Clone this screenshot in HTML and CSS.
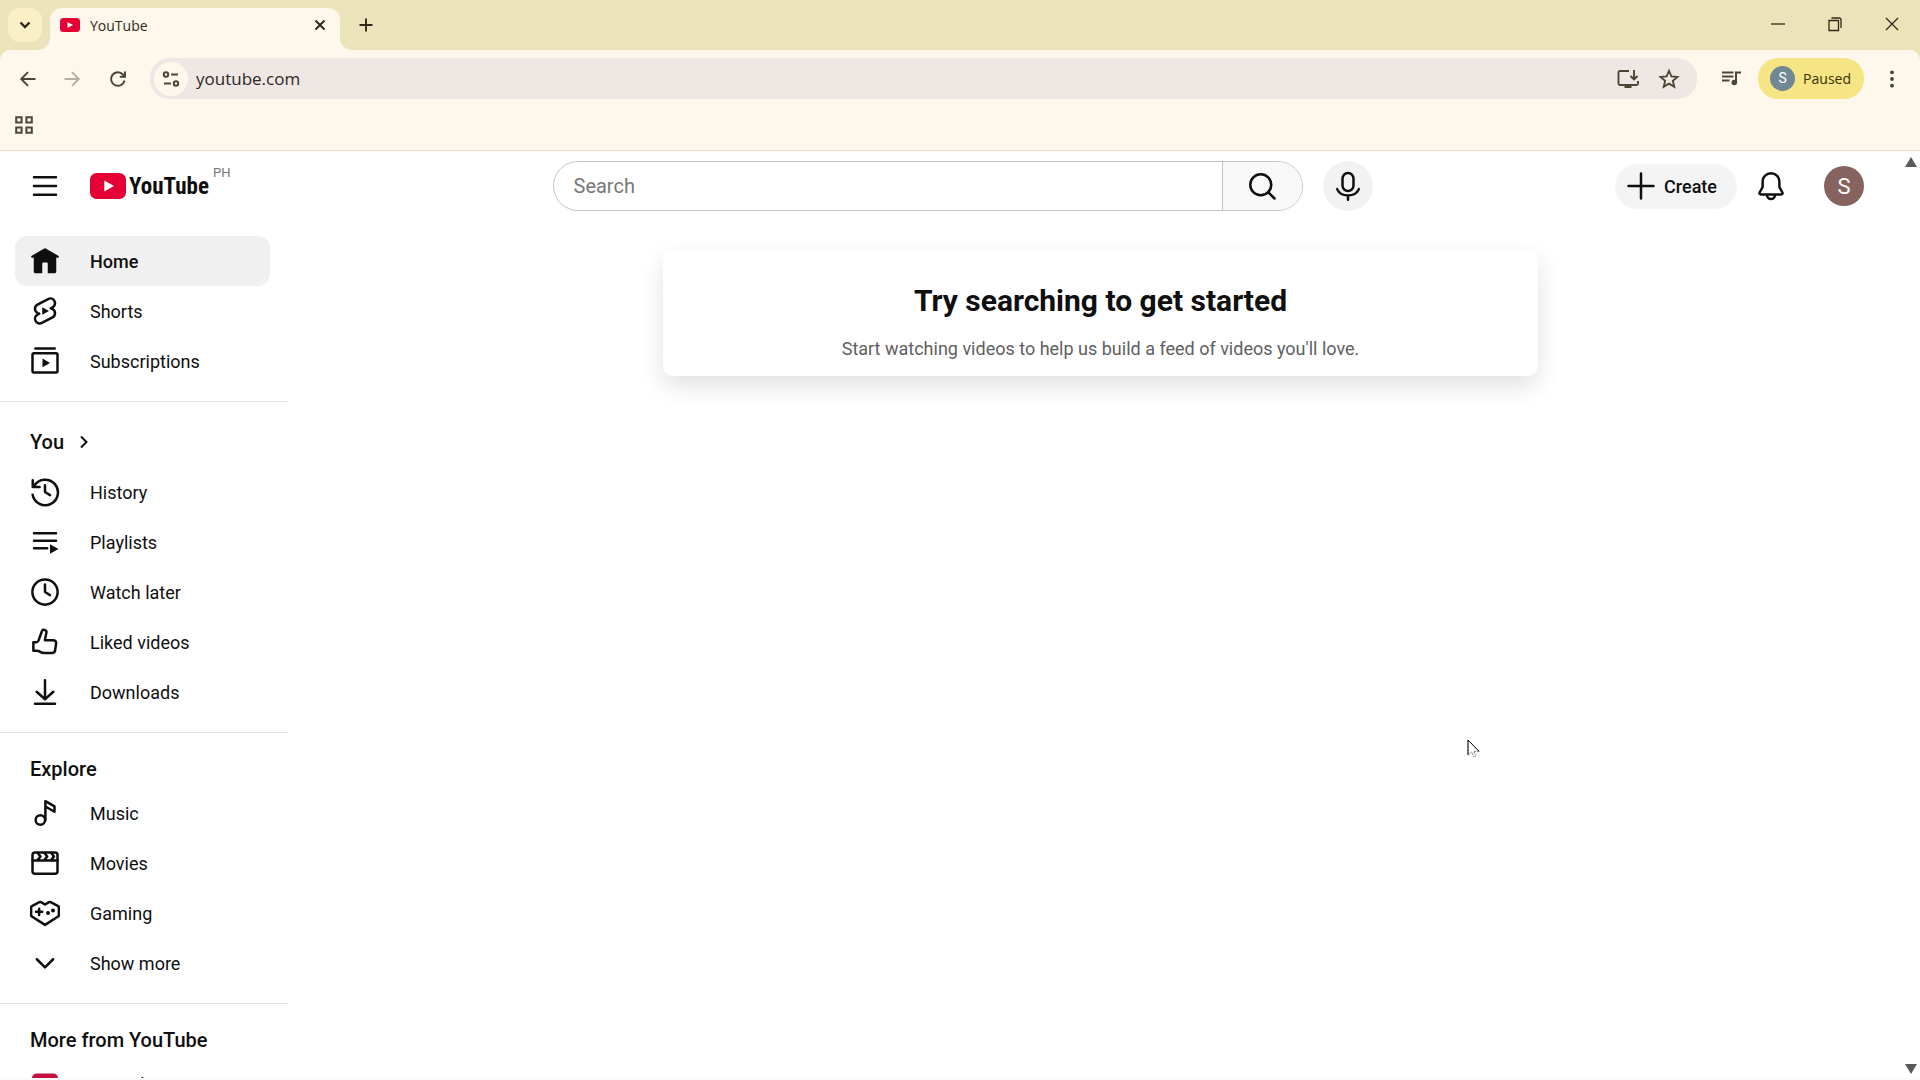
FILE: index.html
```html
<!DOCTYPE html>
<html lang="en">
<head>
    <meta charset="UTF-8">
    <meta name="viewport" content="width=device-width, initial-scale=1.0">
    <title>YouTube</title>
    <link rel="stylesheet" href="styles.css">
</head>
<body>
    <div class="tab-strip">
        <button class="tab-search" aria-label="Search tabs">
            <svg width="16" height="16" viewBox="0 0 16 16"><path d="M3.500 5.500L8 10l4.500-4.500" stroke-width="2.400"/></svg>
        </button>
        <div class="tab">
            <svg class="favicon" width="20" height="14" viewBox="0 0 20 14"><rect width="20" height="14" rx="3.500"/><path d="M7.500 4l5.500 3-5.500 3z"/></svg>
            <span class="tab-title">YouTube</span>
            <button class="tab-close" aria-label="Close tab">
                <svg width="16" height="16" viewBox="0 0 16 16"><path d="M3.500 3.500l9 9m0-9l-9 9" stroke-width="2"/></svg>
            </button>
        </div>
        <button class="new-tab" aria-label="New tab">
            <svg width="16" height="16" viewBox="0 0 16 16"><path d="M8 1.500v13M1.500 8h13" stroke-width="1.900"/></svg>
        </button>
        <div class="window-buttons">
            <button aria-label="Minimize"><svg width="16" height="16" viewBox="0 0 16 16"><path d="M1 8h14" stroke-width="1.300"/></svg></button>
            <button aria-label="Restore"><svg width="16" height="16" viewBox="0 0 16 16"><path d="M2 4.500h9.500v10H2zM4.500 2H12a2 2 0 0 1 2 2v8" stroke-width="1.300"/></svg></button>
            <button aria-label="Close"><svg width="16" height="16" viewBox="0 0 16 16"><path d="M2 2l12 12M14 2L2 14" stroke-width="1.300"/></svg></button>
        </div>
    </div>

    <div class="browser-bar">
        <div class="toolbar">
            <button class="tool" aria-label="Back"><svg width="20" height="20" viewBox="0 0 20 20"><path d="M17.500 10H3.500M10 3.200L3.200 10l6.800 6.800" stroke-width="1.900"/></svg></button>
            <button class="tool" aria-label="Forward" disabled><svg width="20" height="20" viewBox="0 0 20 20"><path d="M2.500 10h14M10 3.200l6.800 6.800-6.800 6.800" stroke-width="1.900"/></svg></button>
            <button class="tool reload" aria-label="Reload"><svg width="20" height="20" viewBox="0 0 20 20"><path d="M16.500 11.500A6.800 6.800 0 1 1 15 5.500L17 7.500M17 2.500v5.200h-5.200" stroke-width="2"/></svg></button>
            <div class="omnibox">
                <button class="site-info" aria-label="View site information">
                    <svg width="18" height="18" viewBox="0 0 18 18"><circle cx="4" cy="4.500" r="2.200"/><path d="M9 4.500h7M2 13.500h7"/><circle cx="14" cy="13.500" r="2.200"/></svg>
                </button>
                <input class="address" type="text" value="youtube.com" aria-label="Address">
                <button class="omni-action" aria-label="Install YouTube"><svg width="24" height="24" viewBox="0 0 24 24"><path d="M13 4H4a1.500 1.500 0 0 0-1.500 1.500v11A1.500 1.500 0 0 0 4 18h16.500a1.500 1.500 0 0 0 1.500-1.500V14M18 3v9M14.500 9l3.500 3.500L21.500 9" stroke-width="1.900"/><path d="M8.500 18h7v3h-7z" fill="currentColor" stroke="none"/></svg></button>
                <button class="omni-action" aria-label="Bookmark this tab"><svg width="22" height="22" viewBox="0 0 24 24"><path d="M12 3l2.600 6.200 6.700.5-5.100 4.400 1.600 6.500-5.800-3.500-5.800 3.500 1.600-6.500-5.100-4.400 6.700-.5z" stroke-width="2"/></svg></button>
            </div>
            <button class="tool" aria-label="Media controls"><svg width="22" height="22" viewBox="0 0 22 22"><path d="M2 4.500h11.500M2 8.500h11.500M2 12.500h7.500M16 14V4.500h5" stroke-width="2"/><circle cx="14.300" cy="14.500" r="2.800" fill="currentColor" stroke="none"/></svg></button>
            <button class="profile"><span class="profile-badge">S</span>Paused</button>
            <button class="tool" aria-label="Menu"><svg width="20" height="20" viewBox="0 0 20 20"><g fill="currentColor" stroke="none"><circle cx="10" cy="3.300" r="1.900"/><circle cx="10" cy="10" r="1.900"/><circle cx="10" cy="16.700" r="1.900"/></g></svg></button>
        </div>
        <div class="bookmarks">
            <button class="apps" aria-label="Apps"><svg width="18" height="18" viewBox="0 0 18 18"><path d="M1.200 1.200h5.400v5.400H1.200zM11.400 1.200h5.400v5.400h-5.400zM1.200 11.400h5.400v5.400H1.200zM11.400 11.400h5.400v5.400h-5.400z" stroke-width="2"/></svg></button>
        </div>
    </div>

    <div class="viewport">
        <div class="page">
            <header class="masthead">
                <div class="start">
                    <button class="guide-button" aria-label="Guide"><svg class="icon" viewBox="0 0 24 24"><path d="M3.200 5h17.600M3.200 12h17.600M3.200 19h17.600"/></svg></button>
                    <a class="logo" href="#">
                        <svg width="36" height="26" viewBox="0 0 36 26"><rect width="36" height="26" rx="6.500" fill="#e50035"/><path d="M14.300 7.500L24 13l-9.700 5.500z" fill="#fff"/></svg>
                        <span class="logo-text">YouTube</span>
                        <span class="country">PH</span>
                    </a>
                </div>
                <div class="center">
                    <form class="search">
                        <input class="search-input" type="text" placeholder="Search" aria-label="Search">
                        <button class="search-button" type="button" aria-label="Search"><svg class="icon" viewBox="0 0 24 24"><circle cx="11" cy="11" r="8.400"/><path d="M17 17l5 5"/></svg></button>
                    </form>
                    <button class="mic" aria-label="Search with your voice"><svg class="icon" viewBox="0 0 24 24"><rect x="7.600" y="1.600" width="8.800" height="14.400" rx="4.400"/><path d="M3.300 14.500c1.300 3 4.600 5 8.700 5s7.400-2 8.700-5M12 19.500V23"/></svg></button>
                </div>
                <div class="end">
                    <button class="create"><svg class="icon" viewBox="0 0 24 24"><path d="M12 2v20M2 12h20"/></svg>Create</button>
                    <button class="bell" aria-label="Notifications"><svg class="icon" viewBox="0 0 24 24"><path d="M12 1.800a6.700 6.700 0 0 0-6.700 6.700v4.300L3 17c-.6 1.100 0 1.700 1 1.700h16c1 0 1.600-.6 1-1.700l-2.300-4.200V8.500A6.700 6.700 0 0 0 12 1.800zM8.800 19.200a3.200 3.200 0 0 0 6.400 0"/></svg></button>
                    <button class="avatar" aria-label="Account">S</button>
                </div>
            </header>

            <div class="content">
                <nav class="guide">
                    <div class="section">
                        <a class="item active" href="#"><svg class="icon" viewBox="0 0 24 24"><path class="solid" d="M11.400 1.900a1.200 1.200 0 0 1 1.200 0l10 5.900c.6.400.7 1 .2 1.400-.5.400-1 .3-1.800 0V20.400c0 .9-.6 1.400-1.500 1.400H14.200V14c0-.5-.3-.8-.8-.8h-2.800c-.5 0-.8.300-.8.8v7.800H4.500c-.9 0-1.500-.5-1.500-1.400V9.200c-.8.300-1.300.4-1.800 0-.5-.4-.4-1 .2-1.400z"/></svg>Home</a>
                        <a class="item" href="#"><svg class="icon" viewBox="0 0 24 24"><path d="M17.770 10.320l-1.200-.5L18 9.060c1.840-.96 2.530-3.230 1.560-5.060s-3.240-2.530-5.070-1.560L6 6.940c-1.290.68-2.070 2.040-2 3.490.07 1.420.93 2.670 2.220 3.250.03.010 1.200.5 1.200.5L6 14.930c-1.830.97-2.530 3.240-1.560 5.070.97 1.830 3.240 2.530 5.070 1.560l8.500-4.500c1.290-.68 2.060-2.040 1.990-3.490-.07-1.420-.94-2.680-2.230-3.250z"/><path class="solid" d="M9.800 9v6l5.400-3z"/></svg>Shorts</a>
                        <a class="item" href="#"><svg class="icon" viewBox="0 0 24 24"><path d="M4.300 2h15.400"/><rect x="2" y="5.800" width="20" height="15.400" rx="1.200"/><path class="solid" d="M10 10v7l6-3.500z"/></svg>Subscriptions</a>
                    </div>
                    <div class="section">
                        <a class="heading-link" href="#">You<svg width="20" height="20" viewBox="0 0 20 20"><path d="M7 4.500l5.500 5.500L7 15.500"/></svg></a>
                        <a class="item" href="#"><svg class="icon" viewBox="0 0 24 24"><path d="M2.100 14.200A10.200 10.200 0 1 0 3.300 7.300M2.200 2.500v5.400h5.500M12 6.500V12l4 2.500"/></svg>History</a>
                        <a class="item" href="#"><svg class="icon" viewBox="0 0 24 24"><path d="M3.200 5h17.600M3.200 11h17.600M3.200 17h10.600"/><path class="solid" d="M16 13.800v7.600l6.800-3.800z"/></svg>Playlists</a>
                        <a class="item" href="#"><svg class="icon" viewBox="0 0 24 24"><circle cx="12" cy="12" r="10.100"/><path d="M12 6v6l4 2.500"/></svg>Watch later</a>
                        <a class="item" href="#"><svg class="icon" viewBox="0 0 24 24"><path d="M2.700 12.200H5c1 0 1.500-.5 1.800-1.300l2.800-7.700c.3-.9 1-1.200 1.800-.9l.8.300c.9.400 1.100 1.100.9 2l-1.200 5.900h6.600c1.600 0 2.600 1.200 2.400 2.700l-.8 5.400c-.2 1.400-1 2.200-2.400 2.200h-6.200c-1.400 0-2.300-.3-3.300-.9-.9-.6-1.800-.9-2.900-.9H2.700z"/></svg>Liked videos</a>
                        <a class="item" href="#"><svg class="icon" viewBox="0 0 24 24"><path d="M12 2.500v15M5.300 11.800l6.700 6 6.700-6M4 21.400h16"/></svg>Downloads</a>
                    </div>
                    <div class="section">
                        <h3>Explore</h3>
                        <a class="item" href="#"><svg class="icon" viewBox="0 0 24 24"><circle cx="8.300" cy="17.600" r="3.800"/><path d="M12.300 17.600V2.500l7.300 4.200V11l-7.300-4.200"/></svg>Music</a>
                        <a class="item" href="#"><svg class="icon" viewBox="0 0 24 24"><rect x="2" y="3.500" width="20" height="17" rx="2"/><path d="M2 9.900h20M6.200 4l2.200 2.800-2.200 2.700M11.600 4l2.200 2.800-2.200 2.700M17 4l2.200 2.800-2.200 2.700"/></svg>Movies</a>
                        <a class="item" href="#"><svg class="icon" viewBox="0 0 24 24"><path d="M7.500 3.300c.5-.2.900-.2 1.300 0L12 5.200l3.200-1.900c.4-.2.800-.2 1.300 0l6 3.200c.4.200.6.600.6 1v6.300c0 .4-.2.800-.6 1L12 21.500 1.500 14.800c-.4-.2-.6-.6-.6-1V7.500c0-.4.200-.8.600-1zM4.800 11h5M7.300 8.500v5"/><circle class="solid" cx="14.400" cy="12" r="1.600"/><circle class="solid" cx="18.400" cy="10" r="1.600"/></svg>Gaming</a>
                        <a class="item" href="#"><svg class="icon" viewBox="0 0 24 24"><path d="M5.500 9l6.500 6.500L18.500 9"/></svg>Show more</a>
                    </div>
                    <div class="section">
                        <h3>More from YouTube</h3>
                        <a class="item" href="#"><svg class="icon" viewBox="0 0 24 24"><rect x="1.500" y="3.500" width="21" height="17" rx="4" fill="#c3123f" stroke="none"/></svg>YouTube Premium</a>
                    </div>
                </nav>
                <main>
                    <div class="card">
                        <h1>Try searching to get started</h1>
                        <p>Start watching videos to help us build a feed of videos you'll love.</p>
                    </div>
                </main>
            </div>
        </div>
        <div class="scrollbar">
            <button aria-label="Scroll up"><svg width="12" height="10" viewBox="0 0 12 10"><path d="M6 0l6 10H0z"/></svg></button>
            <button aria-label="Scroll down"><svg width="12" height="10" viewBox="0 0 12 10"><path d="M6 10L0 0h12z"/></svg></button>
        </div>
    </div>

    <svg class="cursor" width="14" height="20" viewBox="0 0 14 20"><path d="M1 1v15l3.500-3 2.500 5 2-1-2.400-4.600H12z" fill="#fff" stroke="#777" stroke-dasharray="2 1"/><path d="M1 1v15M1 1l11 11.300" stroke="#111" fill="none"/></svg>
</body>
</html>
```
FILE: styles.css
```css
* {
    box-sizing: border-box;
}
body {
    margin: 0;
    height: 100vh;
    display: flex;
    flex-direction: column;
    overflow: hidden;
    background-color: #ebe3b9;
    color: #0f0f0f;
    font-family: Roboto, Arial, sans-serif;
    font-size: 18px;
}
button, input {
    border: none;
    padding: 0;
    background: none;
    color: inherit;
    font: inherit;
}
button {
    display: flex;
    align-items: center;
    justify-content: center;
    flex-shrink: 0;
    cursor: pointer;
}
a {
    color: inherit;
    text-decoration: none;
}
svg {
    flex-shrink: 0;
    fill: none;
    stroke: currentColor;
}

/* tabs */
.tab-strip {
    height: 50px;
    padding: 8px 0 0 8px;
    display: flex;
    color: #30291a;
    font-family: "Open Sans", "Noto Sans", sans-serif;
}
.tab-search {
    width: 34px;
    height: 34px;
    border-radius: 12px;
    background-color: #fbf0c5;
}
.tab {
    position: relative;
    width: 290px;
    margin-left: 8px;
    padding: 0 12px 8px 10px;
    display: flex;
    align-items: center;
    border-radius: 12px 12px 0 0;
    background-color: #fef7eb;
}
.tab::before, .tab::after {
    content: "";
    position: absolute;
    bottom: 0;
    width: 12px;
    height: 12px;
}
.tab::before {
    right: 100%;
    background: radial-gradient(circle at 0 0, transparent 12px, #fef7eb 12px);
}
.tab::after {
    left: 100%;
    background: radial-gradient(circle at 100% 0, transparent 12px, #fef7eb 12px);
}
.favicon {
    stroke: none;
}
.favicon rect {
    fill: #e50035;
}
.favicon path {
    fill: #fff;
}
.tab-title {
    flex: 1;
    margin-left: 10px;
    font-size: 14px;
}
.tab-close {
    width: 16px;
}
.new-tab {
    width: 34px;
    height: 34px;
    margin-left: 9px;
}
.window-buttons {
    display: flex;
    height: 32px;
    margin-left: auto;
}
.window-buttons button {
    width: 57px;
}

/* address bar */
.browser-bar {
    height: 101px;
    flex-shrink: 0;
    border-radius: 10px 10px 0 0;
    border-bottom: 1px solid #e4dccb;
    background-color: #fef7eb;
    color: #4b4536;
    font-family: "Open Sans", "Noto Sans", sans-serif;
}
.toolbar {
    display: flex;
    align-items: center;
    padding: 8px 6px 0;
}
.tool {
    width: 44px;
    height: 41px;
}
.reload {
    width: 48px;
}
.tool:disabled {
    color: #b5af9f;
}
.omnibox {
    flex: 1;
    display: flex;
    align-items: center;
    height: 41px;
    margin: 0 12px 0 8px;
    padding: 0 8px 0 4px;
    border-radius: 20px;
    background-color: #efe7e4;
}
.site-info {
    width: 34px;
    height: 34px;
    border-radius: 50%;
    background-color: #fef7eb;
    stroke-width: 2;
}
.address {
    flex: 1;
    height: 34px;
    margin-left: 8px;
    color: #2b2722;
    font-size: 17px;
    outline: none;
}
.omni-action {
    width: 41px;
    height: 34px;
}
.profile {
    height: 41px;
    margin: 0 6px 0 5px;
    padding: 0 13px 0 12px;
    gap: 8px;
    border-radius: 20px;
    background-color: #f5e584;
    color: #3a3108;
    font-size: 14px;
}
.profile-badge {
    width: 25px;
    height: 25px;
    border-radius: 50%;
    background-color: #6f8893;
    color: #fff;
    font-family: Roboto, sans-serif;
    line-height: 25px;
}
.bookmarks {
    display: flex;
    padding: 13px 15px;
}
.apps {
    height: 26px;
}

/* page */
.viewport {
    flex: 1;
    min-height: 0;
    display: flex;
    background-color: #fff;
    border-bottom: 2px solid #fafcfa;
}
.page {
    flex: 1;
    display: flex;
    flex-direction: column;
    min-width: 0;
    overflow: hidden;
}
.icon {
    width: 30px;
    height: 30px;
    stroke-width: 2;
    stroke-linecap: round;
    stroke-linejoin: round;
}
.solid {
    fill: currentColor;
    stroke: none;
}
.masthead {
    height: 70px;
    flex-shrink: 0;
    display: grid;
    grid-template-columns: 1fr minmax(0, 820px) 1fr;
    align-items: center;
    padding-left: 24px;
}
.start {
    display: flex;
    align-items: center;
    padding-left: 6px;
}
.logo {
    display: flex;
    align-items: center;
    margin-left: 30px;
}
.logo svg {
    stroke: none;
}
.logo-text {
    margin-left: 3px;
    font-family: "Roboto Condensed", "Liberation Sans Narrow", Roboto, sans-serif;
    font-size: 23px;
    font-weight: bold;
}
.country {
    margin: 0 0 26px 4px;
    color: #777;
    font-size: 13px;
    line-height: 14px;
}
.center {
    display: flex;
    align-items: center;
    gap: 20px;
}
.search {
    flex: 1;
    display: flex;
    height: 50px;
    min-width: 0;
    border: 1px solid #c6c6c6;
    border-radius: 25px;
    overflow: hidden;
}
.search-input {
    flex: 1;
    min-width: 0;
    padding-left: 20px;
    font-size: 20px;
    outline: none;
}
.search-input::placeholder {
    color: #777;
}
.search-button {
    width: 80px;
    border-left: 1px solid #c6c6c6;
    background-color: #f8f8f8;
}
.mic {
    width: 50px;
    height: 50px;
    border-radius: 50%;
    background-color: #f2f2f2;
}
.end {
    display: flex;
    align-items: center;
    justify-content: flex-end;
    padding-right: 37px;
}
.create {
    height: 45px;
    padding: 0 20px 0 11px;
    gap: 8px;
    border-radius: 23px;
    background-color: #f4f4f4;
    font-size: 18px;
    font-weight: 500;
}
.bell {
    margin-left: 19px;
}
.avatar {
    width: 40px;
    height: 40px;
    margin-left: 38px;
    border-radius: 50%;
    background-color: #87635f;
    color: #fff;
    font-size: 22px;
}
.content {
    flex: 1;
    min-height: 0;
    display: flex;
}
.guide {
    width: 300px;
    flex-shrink: 0;
    overflow: hidden;
}
.section {
    margin-right: 12px;
    padding: 15px 0 15px 15px;
    border-bottom: 1px solid #e5e5e5;
}
.section:nth-child(n+3) {
    padding-top: 12px;
}
.item {
    display: flex;
    align-items: center;
    height: 50px;
    margin-right: 18px;
    padding-left: 15px;
    gap: 30px;
    border-radius: 12px;
}
.item.active {
    background-color: #f0f0f0;
    font-weight: 500;
}
.heading-link {
    display: flex;
    align-items: center;
    height: 50px;
    padding-left: 15px;
    gap: 10px;
    font-size: 20px;
    font-weight: 500;
}
.heading-link svg {
    stroke-width: 2;
}
h3 {
    margin: 0;
    padding: 10px 15px 5px;
    font-size: 20px;
    font-weight: 500;
    line-height: 28px;
}
main {
    flex: 1;
    padding: 29px 20px;
}
.card {
    max-width: 875px;
    margin: 0 auto;
    padding: 30px 20px 16px;
    border-radius: 10px;
    text-align: center;
    box-shadow: 0 10px 25px rgba(0, 0, 0, 0.12);
}
h1 {
    margin: 0 0 16px;
    font-size: 30px;
    line-height: 42px;
}
.card p {
    margin: 0;
    color: #606060;
    line-height: 22px;
}
.scrollbar {
    width: 19px;
    display: flex;
    flex-direction: column;
    justify-content: space-between;
    padding: 6px 0 4px;
}
.scrollbar svg {
    fill: #5a5a5a;
    stroke: none;
}
.cursor {
    position: absolute;
    left: 1467px;
    top: 739px;
}
```
